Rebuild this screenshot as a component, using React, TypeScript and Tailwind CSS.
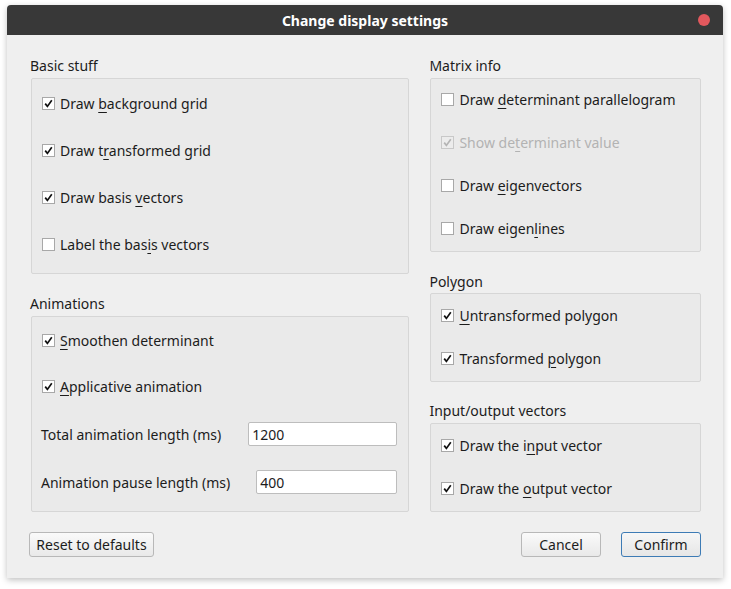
import React from "react";

type Opt = { pre: string; key: string; post: string; checked: boolean; disabled?: boolean };

const font = { fontFamily: '"Noto Sans", "Open Sans", sans-serif' };

function CheckRow({ opt }: { opt: Opt }) {
  return (
    <div className="flex h-[20px] items-center">
      <span
        className={
          "flex h-[13px] w-[13px] items-center justify-center border " +
          (opt.disabled ? "border-[#c8c8c8] bg-[#ececec]" : "border-[#a8a8a8] bg-white")
        }
      >
        {opt.checked && (
          <svg width="9" height="9" viewBox="0 0 9 9">
            <path
              d="M1.2 4.6 L3.4 7.4 L7.8 1.2"
              fill="none"
              stroke={opt.disabled ? "#b4b4b4" : "#111"}
              strokeWidth="1.7"
            />
          </svg>
        )}
      </span>
      <span className={"ml-[5px] text-[14px] " + (opt.disabled ? "text-[#b3b3b3]" : "text-[#1c1c1c]")}>
        {opt.pre}
        <span className="underline underline-offset-[3px]">{opt.key}</span>
        {opt.post}
      </span>
    </div>
  );
}

function GroupLabel({ children }: { children: React.ReactNode }) {
  return <div className="h-[20px] -ml-px text-[14px] leading-[20px] text-[#1c1c1c]">{children}</div>;
}

function Box({ className, children }: { className: string; children: React.ReactNode }) {
  return <div className={"rounded-[2px] border border-[#d6d6d6] bg-[#eaeaea] " + className}>{children}</div>;
}

function Field({ label, value, gap }: { label: string; value: string; gap: string }) {
  return (
    <div className="flex h-[24px] items-center pl-[9px]">
      <span className="text-[14px] text-[#1c1c1c]">{label}</span>
      <div
        className={
          "flex h-[24px] flex-1 items-center rounded-[2px] border border-[#bdbdbd] bg-white pl-[3px] text-[14px] text-[#1c1c1c] " +
          gap
        }
      >
        {value}
      </div>
    </div>
  );
}

function Btn({ children, primary, className }: { children: React.ReactNode; primary?: boolean; className: string }) {
  return (
    <div
      className={
        "flex h-[25px] items-center justify-center rounded-[3px] border text-[14px] text-[#1c1c1c] " +
        (primary
          ? "border-[#3d7bb5] bg-gradient-to-b from-[#f6f6f6] to-[#e6e6e6]"
          : "border-[#b8b8b8] bg-gradient-to-b from-[#fafafa] to-[#e9e9e9]") +
        " " +
        className
      }
    >
      {children}
    </div>
  );
}

export default function App() {
  const basic: Opt[] = [
    { pre: "Draw ", key: "b", post: "ackground grid", checked: true },
    { pre: "Draw t", key: "r", post: "ansformed grid", checked: true },
    { pre: "Draw basis ", key: "v", post: "ectors", checked: true },
    { pre: "Label the bas", key: "i", post: "s vectors", checked: false },
  ];
  const matrix: Opt[] = [
    { pre: "Draw ", key: "d", post: "eterminant parallelogram", checked: false },
    { pre: "Show de", key: "t", post: "erminant value", checked: true, disabled: true },
    { pre: "Draw ", key: "e", post: "igenvectors", checked: false },
    { pre: "Draw eigen", key: "l", post: "ines", checked: false },
  ];

  return (
    <div className="h-[589px] w-[731px] bg-white pl-[7px] pt-[5px]" style={font}>
      <div className="flex h-[573px] w-[716px] flex-col overflow-hidden rounded-t-[4px] bg-[#efefef] shadow-[0_2px_6px_rgba(0,0,0,0.25)]">
        {/* title bar */}
        <div className="relative flex h-[30px] items-center justify-center bg-[#383838]">
          <span className="text-[14px] font-bold text-white">Change display settings</span>
          <span className="absolute right-[13px] top-[9px] h-[12px] w-[12px] rounded-full bg-[#e2585d]" />
        </div>

        <div className="flex flex-1 flex-col pl-[24px] pr-[22px] pt-[21px]">
          <div className="flex gap-[21px]">
            {/* left column */}
            <div className="flex w-[379px] flex-col">
              <GroupLabel>Basic stuff</GroupLabel>
              <Box className="mt-[2px] flex h-[196px] flex-col gap-[27px] pl-[10px] pt-[14px]">
                {basic.map((o) => (
                  <CheckRow key={o.pre + o.post} opt={o} />
                ))}
              </Box>

              <div className="mt-[20px]">
                <GroupLabel>Animations</GroupLabel>
              </div>
              <Box className="mt-[2px] flex h-[196px] flex-col pr-[11px] pt-[13px]">
                <div className="flex flex-col gap-[26px] pl-[10px]">
                  <CheckRow opt={{ pre: "", key: "S", post: "moothen determinant", checked: true }} />
                  <CheckRow opt={{ pre: "", key: "A", post: "pplicative animation", checked: true }} />
                </div>
                <div className="mt-[26px] flex flex-col gap-[24px]">
                  <Field label="Total animation length (ms)" value="1200" gap="ml-[27px]" />
                  <Field label="Animation pause length (ms)" value="400" gap="ml-[26px]" />
                </div>
              </Box>
            </div>

            {/* right column */}
            <div className="flex w-[271px] flex-col">
              <GroupLabel>Matrix info</GroupLabel>
              <Box className="mt-[2px] flex h-[174px] flex-col gap-[23px] pl-[10px] pt-[10px]">
                {matrix.map((o) => (
                  <CheckRow key={o.pre + o.post} opt={o} />
                ))}
              </Box>

              <div className="mt-[20px]">
                <GroupLabel>Polygon</GroupLabel>
              </div>
              <Box className="mt-[1px] flex h-[89px] flex-col gap-[23px] pl-[10px] pt-[11px]">
                <CheckRow opt={{ pre: "", key: "U", post: "ntransformed polygon", checked: true }} />
                <CheckRow opt={{ pre: "Transformed ", key: "p", post: "olygon", checked: true }} />
              </Box>

              <div className="mt-[19px]">
                <GroupLabel>Input/output vectors</GroupLabel>
              </div>
              <Box className="mt-[2px] flex h-[89px] flex-col gap-[23px] pl-[10px] pt-[11px]">
                <CheckRow opt={{ pre: "Draw the i", key: "n", post: "put vector", checked: true }} />
                <CheckRow opt={{ pre: "Draw the ", key: "o", post: "utput vector", checked: true }} />
              </Box>
            </div>
          </div>

          {/* buttons */}
          <div className="mt-[20px] flex items-center">
            <Btn className="-ml-[2px] w-[125px]">Reset to defaults</Btn>
            <div className="flex-1" />
            <Btn className="w-[80px]">Cancel</Btn>
            <Btn primary className="ml-[20px] w-[80px]">
              Confirm
            </Btn>
          </div>
        </div>
      </div>
    </div>
  );
}
